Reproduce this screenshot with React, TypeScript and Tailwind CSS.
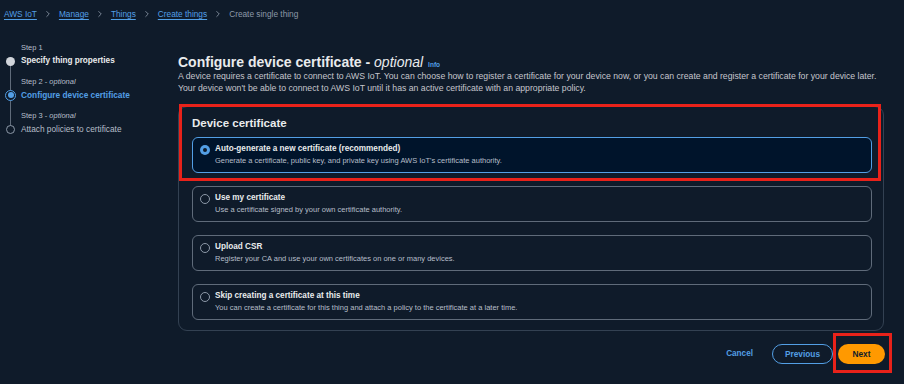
import { ChevronRight } from "lucide-react";

const options = [
  {
    title: "Auto-generate a new certificate (recommended)",
    desc: "Generate a certificate, public key, and private key using AWS IoT's certificate authority.",
    selected: true,
  },
  {
    title: "Use my certificate",
    desc: "Use a certificate signed by your own certificate authority.",
    selected: false,
  },
  {
    title: "Upload CSR",
    desc: "Register your CA and use your own certificates on one or many devices.",
    selected: false,
  },
  {
    title: "Skip creating a certificate at this time",
    desc: "You can create a certificate for this thing and attach a policy to the certificate at a later time.",
    selected: false,
  },
];

const crumbs = ["AWS IoT", "Manage", "Things", "Create things"];

function Radio({ selected }: { selected: boolean }) {
  if (selected) {
    return (
      <span className="block w-[10px] h-[10px] rounded-full bg-[#539fe5] flex items-center justify-center shrink-0">
        <span className="block w-[4px] h-[4px] rounded-full bg-[#0f1b2a]" />
      </span>
    );
  }
  return <span className="block w-[10px] h-[10px] rounded-full border border-[#8d99a8] shrink-0" />;
}

export default function App() {
  return (
    <div
      className="w-[904px] h-[384px] bg-[#0f1b2a] text-[#d1d5db] overflow-hidden relative"
      style={{ fontFamily: '"Liberation Sans", Arial, sans-serif' }}
    >
      {/* Breadcrumbs */}
      <div className="h-[28px] pl-[4px] flex items-center gap-[6px] text-[8.3px]">
        {crumbs.map((c) => (
          <div key={c} className="flex items-center gap-[6px]">
            <span className="text-[#539fe5] underline underline-offset-2">{c}</span>
            <ChevronRight size={10} strokeWidth={2} className="text-[#8d99a8]" />
          </div>
        ))}
        <span className="text-[#8d99a8]">Create single thing</span>
      </div>

      <div className="flex">
        {/* Steps nav */}
        <div className="w-[178px] shrink-0 pt-[15px] pl-[6px] relative">
          <div className="absolute left-[10px] top-[33px] w-px h-[68px] bg-[#5f6b7a]" />
          <div className="flex flex-col gap-[10px]">
            <div className="flex flex-col">
              <span className="pl-[15px] text-[7.5px] leading-[10px] text-[#b6bec9]">Step 1</span>
              <div className="flex items-center gap-[6px] mt-[2px] h-[12px]">
                <span className="block w-[9px] h-[9px] rounded-full bg-[#d1d5db] relative z-10" />
                <span className="text-[8.2px] font-bold text-[#e9ebed]">Specify thing properties</span>
              </div>
            </div>
            <div className="flex flex-col">
              <span className="pl-[15px] text-[7.5px] leading-[10px] text-[#b6bec9]">
                Step 2 - <i>optional</i>
              </span>
              <div className="flex items-center gap-[5px] mt-[2px] -ml-[1px] h-[12px]">
                <span className="block w-[11px] h-[11px] rounded-full border border-[#539fe5] bg-[#0f1b2a] flex items-center justify-center relative z-10">
                  <span className="block w-[6px] h-[6px] rounded-full bg-[#539fe5]" />
                </span>
                <span className="text-[8.3px] font-bold text-[#539fe5]">Configure device certificate</span>
              </div>
            </div>
            <div className="flex flex-col">
              <span className="pl-[15px] text-[7.5px] leading-[10px] text-[#b6bec9]">
                Step 3 - <i>optional</i>
              </span>
              <div className="flex items-center gap-[6px] mt-[2px] h-[12px]">
                <span className="block w-[9px] h-[9px] rounded-full border border-[#8d99a8] bg-[#0f1b2a] relative z-10" />
                <span className="text-[8.3px] text-[#b6bec9]">Attach policies to certificate</span>
              </div>
            </div>
          </div>
        </div>

        {/* Main */}
        <div className="w-[706px] pt-[27px]">
          <div className="flex items-baseline gap-[5px]">
            <h1 className="text-[14px] leading-[14px] font-bold text-[#e9ebed]">
              Configure device certificate - <i className="font-normal">optional</i>
            </h1>
            <span className="text-[6.5px] font-bold text-[#539fe5]">Info</span>
          </div>
          <p className="text-[8.7px] leading-[12px] text-[#c6c6cd]">
            A device requires a certificate to connect to AWS IoT. You can choose how to register a certificate for
            your device now, or you can create and register a certificate for your device later.
            <br />
            Your device won't be able to connect to AWS IoT until it has an active certificate with an appropriate
            policy.
          </p>

          <div className="mt-[12px] border border-[#334152] rounded-[9px] pl-[13px] pr-[11px] pt-[8px] pb-[10px]">
            <h2 className="text-[11.5px] font-bold text-[#e9ebed] leading-[16px]">Device certificate</h2>
            <div className="mt-[6px] flex flex-col gap-[13px]">
              {options.map((o) => (
                <div
                  key={o.title}
                  className={`h-[36px] rounded-[6px] border pl-[7px] flex items-start pt-[5px] gap-[5px] ${
                    o.selected ? "border-[#539fe5] bg-[#00142b]" : "border-[#5f6b7a]"
                  }`}
                >
                  <div className="pt-[2px]">
                    <Radio selected={o.selected} />
                  </div>
                  <div className="flex flex-col">
                    <span className="text-[8.2px] font-bold leading-[12px] text-[#e9ebed]">{o.title}</span>
                    <span className="text-[7.5px] leading-[11px] text-[#b6bec9]">{o.desc}</span>
                  </div>
                </div>
              ))}
            </div>
          </div>

          <div className="mt-[13px] flex items-center justify-end">
            <span className="text-[8.2px] font-bold text-[#539fe5] mr-[19px]">Cancel</span>
            <span className="h-[20px] w-[61px] rounded-full border border-[#539fe5] flex items-center justify-center text-[8.3px] font-bold text-[#539fe5] mr-[5px]">
              Previous
            </span>
            <span className="h-[20px] w-[47px] rounded-full bg-[#ff9900] flex items-center justify-center text-[8.3px] font-bold text-[#0f1b2a] -mr-[1px]">
              Next
            </span>
          </div>
        </div>
      </div>

      {/* Annotation highlights */}
      <div className="absolute left-[179px] top-[104px] w-[702px] h-[77px] border-[3px] border-[#e8221a] pointer-events-none" />
      <div className="absolute left-[833px] top-[333px] w-[59px] h-[40px] border-[3px] border-[#e8221a] pointer-events-none" />
    </div>
  );
}
